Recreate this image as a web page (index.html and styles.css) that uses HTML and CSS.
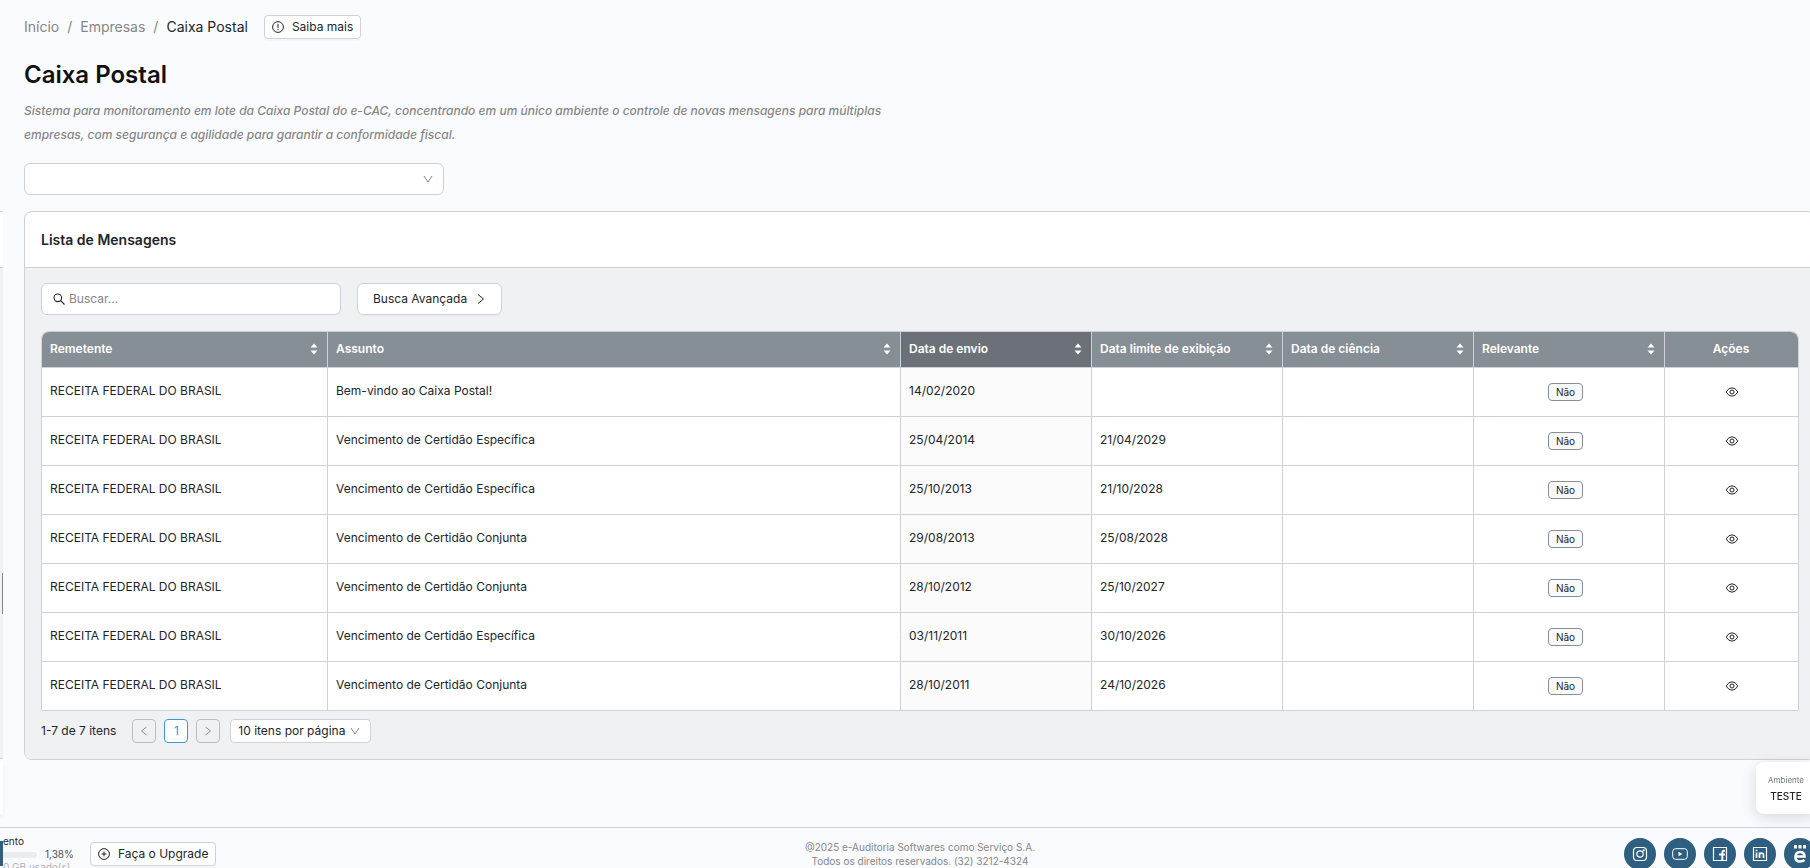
FILE: index.html
```html
<!DOCTYPE html>
<html lang="pt-BR">
<head>
<meta charset="utf-8">
<title>Caixa Postal</title>
<link rel="stylesheet" href="styles.css">
</head>
<body>
<svg class="defs" aria-hidden="true">
  <symbol id="down" viewBox="0 0 10 10"><path d="M1 2l4 6 4-6" fill="none" stroke="currentColor"/></symbol>
  <symbol id="sort" viewBox="0 0 8 12"><path d="M4 0.500L7.500 4.500H0.500zM4 11.500L7.500 7.500H0.500z" fill="currentColor"/></symbol>
  <symbol id="eye" viewBox="0 0 14 12"><path d="M1.200 6Q3.500 1.800 7 1.800T12.800 6Q10.500 10.200 7 10.200T1.200 6z" fill="none" stroke="currentColor"/><circle cx="7" cy="6" r="2" fill="none" stroke="currentColor"/></symbol>
</svg>
<div class="app">
  <aside class="rail" aria-hidden="true">
    <div class="rail-card"><div class="rail-head"></div><div class="rail-body"></div></div>
    <div class="rail-note"></div>
    <div class="rail-thumb"></div>
  </aside>
  <main class="page">
    <nav class="crumbs">
      <a href="#">Início</a><span>/</span><a href="#">Empresas</a><span>/</span><a href="#" class="current">Caixa Postal</a>
      <button class="btn small help"><svg width="12" height="12" viewBox="0 0 12 12" fill="none" stroke="currentColor"><circle cx="6" cy="6" r="5.400"/><path d="M6 2.800V7M6 8V9.200"/></svg>Saiba mais</button>
    </nav>
    <h1>Caixa Postal</h1>
    <p class="intro">Sistema para monitoramento em lote da Caixa Postal do e-CAC, concentrando em um único ambiente o controle de novas mensagens para múltiplas empresas, com segurança e agilidade para garantir a conformidade fiscal.</p>
    <div class="picker company"><select aria-label="Empresa"><option></option></select><svg width="10" height="10"><use href="#down"/></svg></div>
    <section class="card">
      <header class="card-head"><h2>Lista de Mensagens</h2></header>
      <div class="card-body">
        <div class="tools">
          <label class="search"><svg width="12" height="12" viewBox="0 0 12 12" fill="none" stroke="currentColor" stroke-width="1.100"><circle cx="4.800" cy="4.800" r="3.800"/><path d="M7.600 7.600L11.500 11.500"/></svg><input type="text" placeholder="Buscar..." aria-label="Buscar"></label>
          <button class="btn advanced">Busca Avançada<svg width="8" height="12" viewBox="0 0 8 12" fill="none" stroke="currentColor"><path d="M1 1.500L6.500 6 1 10.500"/></svg></button>
        </div>
        <table>
          <colgroup><col class="c-from"><col class="c-subject"><col class="c-data"><col class="c-data"><col class="c-data"><col class="c-data"><col></colgroup>
          <thead><tr>
            <th><div>Remetente<svg width="8" height="12"><use href="#sort"/></svg></div></th>
            <th><div>Assunto<svg width="8" height="12"><use href="#sort"/></svg></div></th>
            <th class="sorted"><div>Data de envio<svg width="8" height="12"><use href="#sort"/></svg></div></th>
            <th><div>Data limite de exibição<svg width="8" height="12"><use href="#sort"/></svg></div></th>
            <th><div>Data de ciência<svg width="8" height="12"><use href="#sort"/></svg></div></th>
            <th><div>Relevante<svg width="8" height="12"><use href="#sort"/></svg></div></th>
            <th class="mid">Ações</th>
          </tr></thead>
          <tbody>
            <tr><td>RECEITA FEDERAL DO BRASIL</td><td>Bem-vindo ao Caixa Postal!</td><td class="sorted">14/02/2020</td><td></td><td></td><td class="mid"><span class="tag">Não</span></td><td class="mid"><button class="view" aria-label="Ver"><svg width="14" height="12"><use href="#eye"/></svg></button></td></tr>
            <tr><td>RECEITA FEDERAL DO BRASIL</td><td>Vencimento de Certidão Específica</td><td class="sorted">25/04/2014</td><td>21/04/2029</td><td></td><td class="mid"><span class="tag">Não</span></td><td class="mid"><button class="view" aria-label="Ver"><svg width="14" height="12"><use href="#eye"/></svg></button></td></tr>
            <tr><td>RECEITA FEDERAL DO BRASIL</td><td>Vencimento de Certidão Específica</td><td class="sorted">25/10/2013</td><td>21/10/2028</td><td></td><td class="mid"><span class="tag">Não</span></td><td class="mid"><button class="view" aria-label="Ver"><svg width="14" height="12"><use href="#eye"/></svg></button></td></tr>
            <tr><td>RECEITA FEDERAL DO BRASIL</td><td>Vencimento de Certidão Conjunta</td><td class="sorted">29/08/2013</td><td>25/08/2028</td><td></td><td class="mid"><span class="tag">Não</span></td><td class="mid"><button class="view" aria-label="Ver"><svg width="14" height="12"><use href="#eye"/></svg></button></td></tr>
            <tr><td>RECEITA FEDERAL DO BRASIL</td><td>Vencimento de Certidão Conjunta</td><td class="sorted">28/10/2012</td><td>25/10/2027</td><td></td><td class="mid"><span class="tag">Não</span></td><td class="mid"><button class="view" aria-label="Ver"><svg width="14" height="12"><use href="#eye"/></svg></button></td></tr>
            <tr><td>RECEITA FEDERAL DO BRASIL</td><td>Vencimento de Certidão Específica</td><td class="sorted">03/11/2011</td><td>30/10/2026</td><td></td><td class="mid"><span class="tag">Não</span></td><td class="mid"><button class="view" aria-label="Ver"><svg width="14" height="12"><use href="#eye"/></svg></button></td></tr>
            <tr><td>RECEITA FEDERAL DO BRASIL</td><td>Vencimento de Certidão Conjunta</td><td class="sorted">28/10/2011</td><td>24/10/2026</td><td></td><td class="mid"><span class="tag">Não</span></td><td class="mid"><button class="view" aria-label="Ver"><svg width="14" height="12"><use href="#eye"/></svg></button></td></tr>
          </tbody>
        </table>
        <div class="pager">
          <span class="total">1-7 de 7 itens</span>
          <button class="step" disabled aria-label="Anterior"><svg width="8" height="10" viewBox="0 0 8 10" fill="none" stroke="currentColor"><path d="M6.500 1L1.500 5l5 4"/></svg></button>
          <button class="step on">1</button>
          <button class="step" disabled aria-label="Próxima"><svg width="8" height="10" viewBox="0 0 8 10" fill="none" stroke="currentColor"><path d="M1.500 1l5 4-5 4"/></svg></button>
          <div class="picker size"><select aria-label="Itens por página"><option>10 itens por página</option></select><svg width="10" height="10"><use href="#down"/></svg></div>
        </div>
      </div>
    </section>
  </main>
  <footer>
    <div class="foot-left">
      <div class="avatar"></div>
      <div class="storage">
        <span class="name">ento</span>
        <div class="usage"><div class="bar"></div><span>1,38%</span></div>
        <span class="used">0 GB usado(s)</span>
      </div>
      <button class="btn small upgrade"><svg width="12" height="12" viewBox="0 0 12 12" fill="none" stroke="currentColor"><circle cx="6" cy="6" r="5.400"/><path d="M3.500 6h5M6 3.500v5"/></svg>Faça o Upgrade</button>
    </div>
    <p class="legal">@2025 e-Auditoria Softwares como Serviço S.A.<br>Todos os direitos reservados. (32) 3212-4324</p>
    <div class="social">
      <a href="#" aria-label="Instagram"><svg width="16" height="16" viewBox="0 0 16 16" fill="none" stroke="#fff" stroke-width="1.200"><rect x="1.500" y="1.500" width="13" height="13" rx="3.500"/><circle cx="8" cy="8" r="3.200"/><circle cx="11.700" cy="4.300" r=".5" fill="#fff"/></svg></a>
      <a href="#" aria-label="YouTube"><svg width="16" height="16" viewBox="0 0 16 16" fill="none" stroke="#fff"><rect x=".7" y="2.700" width="14.600" height="10.600" rx="2.800"/><path d="M6.500 5.800L10.300 8l-3.800 2.200z" fill="#fff" stroke="none"/></svg></a>
      <a href="#" aria-label="Facebook"><svg width="16" height="16" viewBox="0 0 16 16" fill="none" stroke="#fff"><path d="M1.500 1.500h13v13h-13z" stroke-width="1.200"/><path d="M10.300 14.500V6.800Q10.300 4.700 12 4.700H13M7 8.500H13" stroke-width="1.900"/></svg></a>
      <a href="#" aria-label="LinkedIn"><svg width="16" height="16" viewBox="0 0 16 16" fill="none" stroke="#fff"><path d="M1.500 1.500h13v13h-13z" stroke-width="1.200"/><path d="M4.500 6.500V12M4.500 3.700V5.200M7.500 12V6.500M7.500 9Q7.500 7.200 9.500 7.200T11.500 9V12" stroke-width="1.700"/></svg></a>
      <a href="#" aria-label="e-Auditoria"><svg width="16" height="20" viewBox="0 0 16 20" fill="none" stroke="#fff"><path d="M3.500 12.500H12.500Q12.500 8 8 8T3.500 13Q3.500 17.500 8 17.500Q10.500 17.500 12.500 16" stroke-width="2.600"/><path d="M2 1h3v3.500H2zM6.500 1h3v3.500h-3zM11 1h3v3.500h-3z" fill="#fff" stroke="none"/></svg></a>
    </div>
  </footer>
</div>
<div class="env"><span>Ambiente</span><strong>TESTE</strong></div>
</body>
</html>
```

FILE: styles.css
```css
* { box-sizing: border-box; }
body {
  margin: 0;
  overflow: hidden;
  background: #fafbff;
  color: #212529;
  font-family: Inter, "Open Sans", sans-serif;
  font-size: 12px;
  line-height: 20px;
}
button, input, select { font: inherit; color: inherit; }
svg { flex: none; }
.defs { position: absolute; width: 0; height: 0; }

.app {
  display: grid;
  grid-template: 1fr auto / 3px 1fr;
  min-height: 100vh;
  margin-right: -30px;
}
.rail { position: relative; padding-top: 211px; }
.rail-card { border-top: 1px solid #ced1d9; border-bottom: 1px solid #ced1d9; }
.rail-head { height: 55px; background: #fff; }
.rail-body { height: 491px; background: #f0f1f3; border-top: 1px solid #ced1d9; }
.rail-note { height: 52px; margin-top: 3px; background: #fff; box-shadow: 0 4px 4px rgba(0, 0, 0, .06); }
.rail-thumb { position: absolute; right: 0; top: 573px; width: 1px; height: 41px; background: #8c857e; }

.page { padding: 15px 24px 24px 21px; }
.crumbs { display: flex; align-items: center; gap: 8px; height: 24px; font-size: 14px; color: #868686; }
.crumbs a { color: inherit; text-decoration: none; }
.crumbs .current { color: #212529; }
.btn {
  display: inline-flex;
  align-items: center;
  justify-content: center;
  background: #fff;
  border: 1px solid #ced1d9;
  border-radius: 6px;
  box-shadow: 0 2px 0 rgba(0, 0, 0, .02);
  white-space: nowrap;
}
.btn.small { height: 24px; padding: 0 7px; gap: 8px; border-radius: 4px; }
.btn.help { margin-left: 8px; font-size: 12px; color: #212529; }
h1 { margin: 20px 0 0; font-size: 24px; line-height: 32px; font-weight: 600; color: #111; }
.intro { width: 50%; margin: 8px 0 16px; line-height: 24px; font-weight: 500; font-style: italic; color: #868686; }
.picker { position: relative; display: flex; align-items: center; }
.picker select {
  width: 100%;
  height: 100%;
  appearance: none;
  background: #fff;
  border: 1px solid #ced1d9;
  border-radius: 6px;
}
.picker svg { position: absolute; right: 11px; color: #868686; pointer-events: none; }
.company { width: 420px; height: 32px; }

.card { margin-top: 16px; background: #fff; border: 1px solid #ced1d9; border-radius: 8px; overflow: hidden; }
.card-head { padding: 16px; }
h2 { margin: 0; font-size: 14px; line-height: 23px; font-weight: 600; }
.card-body { padding: 15px 16px 16px; background: #f0f1f3; border-top: 1px solid #ced1d9; }
.tools { display: flex; gap: 16px; height: 32px; margin-bottom: 16px; }
.search {
  display: flex;
  align-items: center;
  gap: 4px;
  width: 300px;
  padding: 0 11px;
  background: #fff;
  border: 1px solid #ced1d9;
  border-radius: 6px;
}
.search input { flex: 1; min-width: 0; padding: 0; border: 0; outline: 0; background: none; }
.search input::placeholder { color: #868686; }
.advanced { padding: 0 16px 0 15px; gap: 10px; }

table {
  width: 100%;
  table-layout: fixed;
  border-collapse: separate;
  border-spacing: 0;
  background: #fff;
  border: solid #ced1d9;
  border-width: 1px 0 0 1px;
  border-radius: 8px 8px 0 0;
  overflow: hidden;
}
.c-from { width: 286px; }
.c-subject { width: 573px; }
.c-data { width: 191px; }
th, td { padding: 0 8px 2px; text-align: left; border: solid #ced1d9; border-width: 0 1px 1px 0; }
th { height: 36px; padding-right: 9px; background: #868e96; color: #fff; font-weight: 600; }
th:last-child { border-top-right-radius: 8px; }
th div { display: flex; align-items: center; justify-content: space-between; }
th.sorted { background: #6c7078; }
td { height: 49px; }
td.sorted { background: #fbfbfb; }
th.mid, td.mid { text-align: center; }
.tag {
  display: inline-block;
  margin-right: 7px;
  padding: 0 7px;
  font-size: 10px;
  line-height: 16px;
  vertical-align: middle;
  background: #f8f9fa;
  border: 1px solid #868e96;
  border-radius: 4px;
}
.view { padding: 0; border: 0; background: none; vertical-align: middle; }
.view svg { display: block; }

.pager { display: flex; align-items: center; gap: 8px; margin-top: 8px; }
.total { margin-right: 8px; }
.step {
  display: flex;
  align-items: center;
  justify-content: center;
  width: 24px;
  height: 24px;
  padding: 0;
  color: #868e96;
  background: none;
  border: 1px solid #b9bcc2;
  border-radius: 4px;
}
.step.on { color: #4096d4; background: #fff; border-color: #4096d4; }
.size { width: 141px; height: 24px; margin-left: 2px; }
.size select { padding: 0 7px; border-radius: 4px; }

footer {
  grid-column: 1 / 3;
  display: grid;
  grid-template-columns: 1fr auto 1fr;
  height: 41px;
  padding: 0 24px;
  border-top: 1px solid #ced1d9;
}
.foot-left { display: flex; align-items: flex-start; margin-left: -24px; }
.avatar { width: 3px; height: 25px; margin-top: 13px; background: #2f5f80; }
.storage { width: 87px; padding-top: 7px; font-size: 10px; line-height: 13px; color: #495057; }
.storage span { display: block; white-space: nowrap; }
.storage .name { color: #212529; }
.usage { display: flex; align-items: center; gap: 8px; }
.bar { width: 34px; height: 6px; background: #ececee; border-radius: 0 3px 3px 0; }
.storage .used { color: #adb0b5; }
.upgrade { margin-top: 14px; }
.legal { margin: 12px 0 0; font-size: 10px; line-height: 14px; text-align: center; color: #868686; }
.social { display: flex; justify-content: flex-end; gap: 8px; padding-top: 10px; }
.social a { display: flex; align-items: center; justify-content: center; width: 32px; height: 32px; background: #2f5f80; border-radius: 50%; }

.env {
  position: fixed;
  right: -6px;
  bottom: 54px;
  display: flex;
  flex-direction: column;
  align-items: center;
  width: 60px;
  padding: 10px 0;
  background: #fff;
  border-radius: 8px;
  box-shadow: 0 4px 16px rgba(0, 0, 0, .14);
  font-size: 8px;
  line-height: 16px;
  color: #6c757d;
}
.env strong { font-size: 10px; font-weight: 500; color: #212529; }
```
